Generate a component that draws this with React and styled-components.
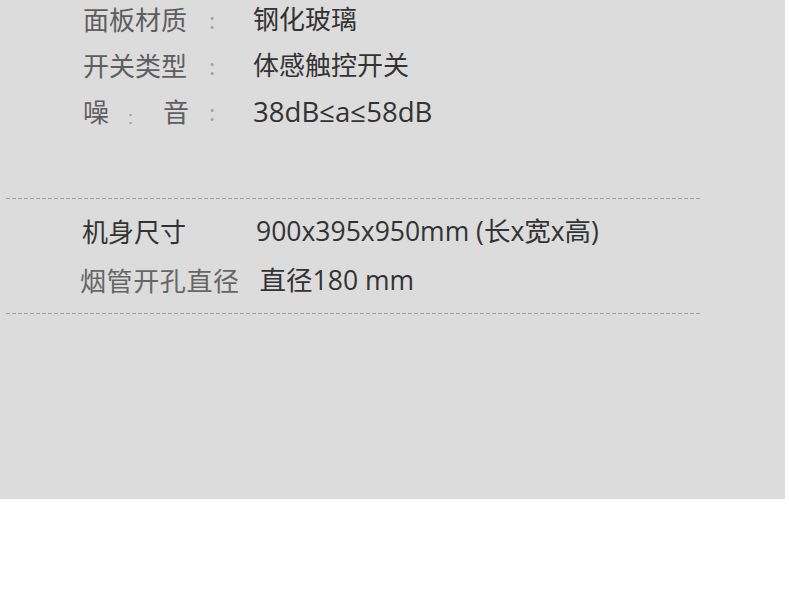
import React from "react";
import styled, { createGlobalStyle } from "styled-components";

const Global = createGlobalStyle`
  html, body { margin: 0; padding: 0; background: #ffffff; }
  body { font-family: "Noto Sans CJK SC", "Noto Sans", sans-serif; }
`;

const Panel = styled.section`
  width: 785px;
  height: 499px;
  background: #dcdcdc;
  display: flex;
  flex-direction: column;
`;

const SpecList = styled.div`
  display: flex;
  flex-direction: column;
  gap: 8px;
  padding-left: 83px;
`;

const SpecRow = styled.div`
  display: flex;
  align-items: center;
  height: 38px;
  font-size: 26px;
  line-height: 38px;
`;

const SpecLabel = styled.span`
  width: 106px;
  color: #5e5e5e;
  display: flex;
  justify-content: space-between;
  align-items: center;
`;

const SmallColon = styled.span`
  font-size: 14px;
  color: #9a9a9a;
  position: relative;
  top: 6px;
  left: -2px;
`;

const Colon = styled.span`
  width: 64px;
  padding-left: 20px;
  box-sizing: border-box;
  color: #a4a4a4;
  font-size: 22px;
`;

const SpecValue = styled.span`
  color: #333333;
  font-family: "Open Sans", "Noto Sans CJK SC", sans-serif;
  font-size: ${(p) => (p.$latin ? "27.6px" : "26px")};
`;

const Dashed = styled.div`
  margin-left: 6px;
  width: 695px;
  height: 1px;
  background: repeating-linear-gradient(
    to right,
    #a0a0a0 0 4px,
    transparent 4px 6px
  );
  margin-top: ${(p) => p.$top || 0}px;
`;

const DimList = styled.div`
  display: flex;
  flex-direction: column;
  gap: 11px;
  padding: 13px 0 14px 0;
`;

const DimRow = styled.div`
  display: flex;
  align-items: center;
  height: 38px;
  line-height: 38px;
  font-size: 26px;
  padding-left: ${(p) => p.$indent}px;
`;

const DimLabel = styled.span`
  color: ${(p) => (p.$dark ? "#333333" : "#666666")};
  width: ${(p) => (p.$width ? `${p.$width}px` : "auto")};
  letter-spacing: ${(p) => (p.$dark ? "0" : "0.6px")};
  flex: none;
`;

const DimValue = styled.span`
  color: #333333;
  font-family: "Open Sans", "Noto Sans CJK SC", sans-serif;
  font-size: 26.5px;
  margin-left: ${(p) => p.$gap || 0}px;
`;

const specs = [
  { label: "面板材质", value: "钢化玻璃" },
  { label: "开关类型", value: "体感触控开关" },
  { label: "噪音", value: "38dB≤a≤58dB", split: true, latin: true },
];

export default function App() {
  return (
    <>
      <Global />
      <Panel>
        <SpecList>
          {specs.map((s) => (
            <SpecRow key={s.label}>
              <SpecLabel>
                {s.split ? (
                  <>
                    <span>噪</span>
                    <SmallColon>：</SmallColon>
                    <span>音</span>
                  </>
                ) : (
                  s.label
                )}
              </SpecLabel>
              <Colon>:</Colon>
              <SpecValue $latin={s.latin}>{s.value}</SpecValue>
            </SpecRow>
          ))}
        </SpecList>
        <Dashed $top={68} />
        <DimList>
          <DimRow $indent={82}>
            <DimLabel $dark $width={174}>机身尺寸</DimLabel>
            <DimValue>900x395x950mm (长x宽x高)</DimValue>
          </DimRow>
          <DimRow $indent={80}>
            <DimLabel>烟管开孔直径</DimLabel>
            <DimValue $gap={20}>直径180 mm</DimValue>
          </DimRow>
        </DimList>
        <Dashed />
      </Panel>
    </>
  );
}
